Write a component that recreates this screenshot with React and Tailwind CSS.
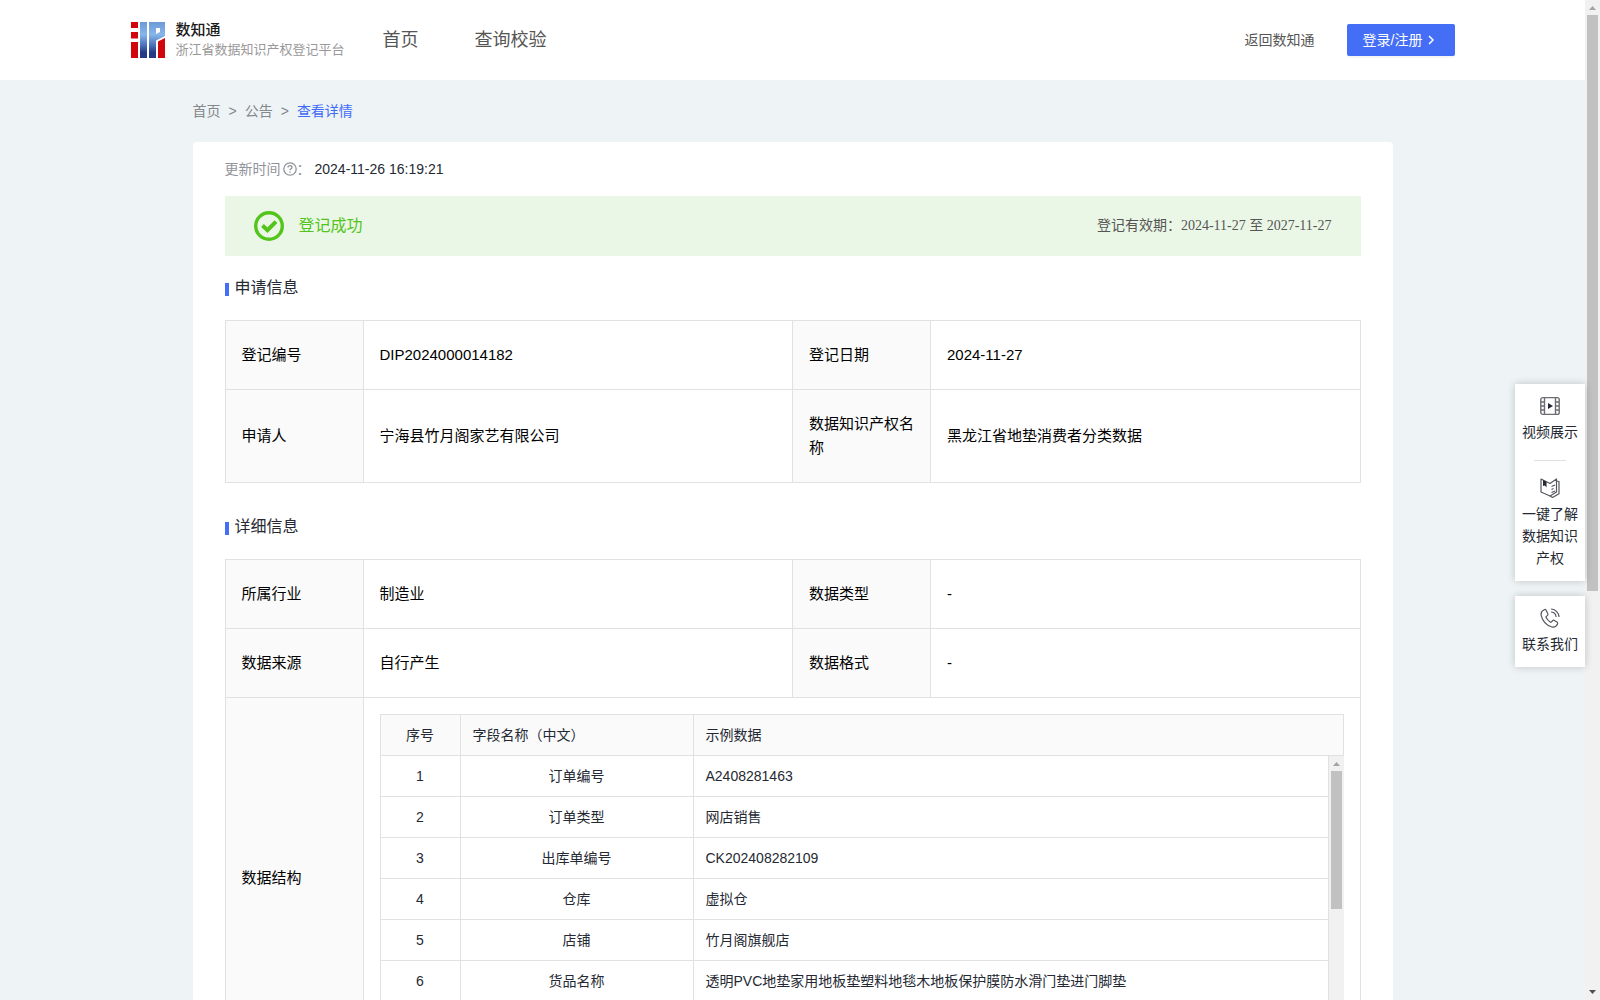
import React from "react";

const applyRows = [
  ["登记编号", "DIP2024000014182", "登记日期", "2024-11-27"],
  ["申请人", "宁海县竹月阁家艺有限公司", "数据知识产权名称", "黑龙江省地垫消费者分类数据"],
];

const detailRows = [
  ["所属行业", "制造业", "数据类型", "-"],
  ["数据来源", "自行产生", "数据格式", "-"],
];

const fields = [
  ["订单编号", "A2408281463"],
  ["订单类型", "网店销售"],
  ["出库单编号", "CK202408282109"],
  ["仓库", "虚拟仓"],
  ["店铺", "竹月阁旗舰店"],
  ["货品名称", "透明PVC地垫家用地板垫塑料地毯木地板保护膜防水滑门垫进门脚垫"],
];

function Logo() {
  return (
    <svg width="34" height="36" viewBox="0 0 34 36" aria-hidden="true">
      <defs>
        <linearGradient id="logoBlue" x1="0" y1="0" x2="0" y2="36" gradientUnits="userSpaceOnUse">
          <stop offset="0" stopColor="#6c9ad6" />
          <stop offset="0.35" stopColor="#86b6ea" />
          <stop offset="0.65" stopColor="#4a70b8" />
          <stop offset="0.85" stopColor="#263a86" />
        </linearGradient>
      </defs>
      <path d="M0 0h7v6H0zM0 10h7v6.500H0zM0 20h7v16H0z" fill="#d0060c" />
      <path d="M9 0h7v36H9z" fill="url(#logoBlue)" />
      <path
        d="M18 0h16v14l-9 4.500V36h-7zM25 6v6l4-2V6z"
        fill="url(#logoBlue)"
        fillRule="evenodd"
      />
      <path d="M27 19.500l7-3.500v20h-7z" fill="#d0060c" />
    </svg>
  );
}

function ScrollTrack({ thumb }) {
  return (
    <div className="flex w-[15px] shrink-0 flex-col items-center bg-[#f1f1f1]" aria-hidden="true">
      <svg width="15" height="15" viewBox="0 0 15 15" className="shrink-0">
        <path d="M4 10h7L7.500 6z" fill="#a3a3a3" />
      </svg>
      <div className="flex w-full flex-1 justify-center">
        <div className={`w-[11px] bg-[#c1c1c1] ${thumb}`} />
      </div>
      <svg width="15" height="15" viewBox="0 0 15 15" className="shrink-0">
        <path d="M4 5h7L7.500 9z" fill="#505050" />
      </svg>
    </div>
  );
}

function SectionTitle({ children }) {
  return (
    <h2 className="flex h-6 items-center gap-[6px] text-base text-[#252933]">
      <span className="mt-[3px] h-[13px] w-1 bg-[#446ef5]" />
      {children}
    </h2>
  );
}

function InfoTable({ rows, children }) {
  return (
    <table className="w-full table-fixed border-collapse text-[15px] leading-6 text-black">
      <colgroup>
        <col className="w-[138px]" />
        <col />
        <col className="w-[138px]" />
        <col />
      </colgroup>
      <tbody>
        {rows.map((row) => (
          <tr key={row[0]}>
            {row.map((cell, i) =>
              i % 2 === 0 ? (
                <th key={i} scope="row" className="border border-[#e1e1e1] bg-[#fafafa] px-4 py-[22px] text-left font-normal">
                  {cell}
                </th>
              ) : (
                <td key={i} className="border border-[#e1e1e1] px-4 py-[22px]">
                  {cell}
                </td>
              )
            )}
          </tr>
        ))}
        {children}
      </tbody>
    </table>
  );
}

function FieldCols() {
  return (
    <colgroup>
      <col className="w-[80px]" />
      <col className="w-[233px]" />
      <col />
    </colgroup>
  );
}

function FieldTable() {
  return (
    <div className="text-sm text-[#252933]">
      <div className="border border-[#e1e1e1] bg-[#fafafa]">
        <table className="w-full table-fixed border-separate border-spacing-0">
          <FieldCols />
          <thead>
            <tr className="h-10">
              <th className="border-r border-[#e1e1e1] text-center font-normal">序号</th>
              <th className="border-r border-[#e1e1e1] px-3 text-left font-normal">字段名称（中文）</th>
              <th className="px-3 text-left font-normal">示例数据</th>
            </tr>
          </thead>
        </table>
      </div>
      <div className="flex h-[286px]">
        <div className="min-w-0 flex-1 overflow-hidden border-x border-[#e1e1e1]">
          <table className="w-full table-fixed border-separate border-spacing-0">
            <FieldCols />
            <tbody>
              {fields.map(([name, sample], i) => (
                <tr key={name} className="h-[41px]">
                  <td className="border-r border-b border-[#e1e1e1] text-center">{i + 1}</td>
                  <td className="border-r border-b border-[#e1e1e1] px-3 text-center">{name}</td>
                  <td className="border-b border-[#e1e1e1] px-3">{sample}</td>
                </tr>
              ))}
            </tbody>
          </table>
        </div>
        <ScrollTrack thumb="h-[54%]" />
      </div>
    </div>
  );
}

function VideoIcon() {
  return (
    <svg width="20" height="20" viewBox="0 0 20 20" fill="none" stroke="#6b6d73" strokeWidth="1.4" aria-hidden="true">
      <rect x="0.800" y="1.600" width="18.400" height="16.800" rx="2" />
      <path d="M4.500 1.600v16.800M15.500 1.600v16.800M1 6h3.500M1 10h3.500M1 14h3.500M15.500 6H19M15.500 10H19M15.500 14H19" />
      <path d="M8 7l5 3-5 3z" fill="#252933" stroke="none" />
    </svg>
  );
}

function BookIcon() {
  return (
    <svg width="20" height="20" viewBox="0 0 20 20" fill="none" stroke="#55575e" strokeWidth="1.2" strokeLinejoin="round" aria-hidden="true">
      <path d="M1 1l9 4.500L16.500 1v13L10 18 1 14z" />
      <path d="M16.500 3l2.500.5v12.200L12.500 19.400 10 18" />
      <path d="M3 2l3.500 1.700v5.800L4.800 7.500 3 8z" fill="#252933" stroke="none" />
      <path d="M11.500 8.500L15 7M11.500 11.500L13.500 10.500M11.500 14.500L15 13" />
    </svg>
  );
}

function PhoneIcon() {
  return (
    <svg width="20" height="20" viewBox="0 0 20 20" fill="none" stroke="#55575e" strokeWidth="1.2" strokeLinecap="round" strokeLinejoin="round" aria-hidden="true">
      <path d="M4.200 1.700C2 2.700.6 5 1.300 7.800c1.400 5.300 5 9.300 10.200 11 2.500.7 5-.5 6-2.800.3-.8 0-1.500-.6-1.900l-2.500-1.600c-.8-.5-1.500-.3-2 .3l-.8 1c-.4.4-.9.5-1.400.2-1.800-1.100-3.200-2.600-4.100-4.400-.2-.5-.1-1 .3-1.300l.9-.7c.6-.5.8-1.200.4-2L6.200 2.400c-.4-.8-1.200-1.100-2-.7z" />
      <path d="M11.500 1c3.800.3 7 3.500 7.500 7.500M11.500 4c2.300.3 4.200 2.200 4.500 4.500" />
    </svg>
  );
}

function SideTools() {
  return (
    <aside className="absolute top-[384px] right-[15px] flex w-[70px] flex-col gap-[15px] text-center text-sm leading-[22px] text-[#252933]">
      <div className="flex flex-col items-center bg-white py-3 shadow-[0_0_8px_rgba(0,0,0,0.2)]">
        <a href="#video" className="flex flex-col items-center gap-[5px] px-[6px]">
          <VideoIcon />
          视频展示
        </a>
        <span className="my-[17px] h-px w-8 bg-[#e1e1e1]" />
        <a href="#guide" className="flex flex-col items-center gap-[5px] px-[6px]">
          <BookIcon />
          一键了解数据知识产权
        </a>
      </div>
      <a href="#contact" className="flex flex-col items-center gap-[5px] bg-white px-[6px] py-3 shadow-[0_0_8px_rgba(0,0,0,0.2)]">
        <PhoneIcon />
        联系我们
      </a>
    </aside>
  );
}

function Header() {
  return (
    <header className="h-20 bg-white">
      <div className="mx-auto flex h-full max-w-[1324px] items-center">
        <a href="#top" className="flex w-[252px] items-center gap-[11px]">
          <Logo />
          <span className="flex flex-col whitespace-nowrap">
            <span className="text-[15px] leading-5 font-medium text-[#1a1a1a]">数知通</span>
            <span className="text-[13px] leading-5 text-[#999]">浙江省数据知识产权登记平台</span>
          </span>
        </a>
        <nav className="flex gap-14 text-lg text-[#555]">
          <a href="#home">首页</a>
          <a href="#query">查询校验</a>
        </nav>
        <div className="ml-auto flex items-center gap-8 text-sm">
          <a href="#back" className="text-[#555]">返回数知通</a>
          <button type="button" className="flex h-8 w-[108px] items-center gap-[3px] rounded-[2px] bg-[#446ef5] px-4 whitespace-nowrap text-white shadow-[0_2px_0_rgba(0,0,0,0.04)]">
            登录/注册
            <svg width="12" height="12" viewBox="0 0 12 12" fill="none" stroke="currentColor" strokeWidth="1.5" className="shrink-0" aria-hidden="true">
              <path d="M4 2L8 6l-4 4" />
            </svg>
          </button>
        </div>
      </div>
    </header>
  );
}

function App() {
  return (
    <div className="relative flex h-screen bg-[#eef3f6] font-['Liberation_Sans','Noto_Sans_CJK_SC',sans-serif]">
      <div className="min-w-0 flex-1 overflow-hidden">
        <Header />
        <main className="mx-auto max-w-[1200px]">
          <nav className="flex h-[62px] items-center gap-2 text-sm text-[#84878c]">
            <a href="#home">首页</a>
            <span>&gt;</span>
            <a href="#notice">公告</a>
            <span>&gt;</span>
            <a href="#detail" className="text-[#3f6bf6]">查看详情</a>
          </nav>

          <div className="rounded-[4px] bg-white px-8 pb-8">
            <div className="flex h-[54px] items-center text-sm">
              <span className="text-[#909399]">更新时间</span>
              <svg width="14" height="14" viewBox="0 0 14 14" fill="none" stroke="#909399" strokeWidth="1.300" className="ml-[2px]" aria-hidden="true">
                <circle cx="7" cy="7" r="6.200" />
                <path d="M5 5.600c0-1.200.9-1.900 2-1.900s2 .7 2 1.800C9 6.800 7 6.900 7 8.300M7 9.500v1.200" />
              </svg>
              <span className="text-[#909399]">：</span>
              <span className="ml-1 text-[#252933]">2024-11-26 16:19:21</span>
            </div>

            <div className="flex h-[60px] items-center bg-[#ebf7e6] px-[29px] text-[#52c41a]">
              <svg width="30" height="30" viewBox="0 0 30 30" fill="none" stroke="#52c41a" aria-hidden="true">
                <circle cx="15" cy="15" r="13.300" strokeWidth="3.400" />
                <path d="M8.500 14.500l5 4.700 8.500-8.500" strokeWidth="4" />
              </svg>
              <span className="ml-[15px] text-base">登记成功</span>
              <span className="ml-auto font-['Liberation_Serif','Noto_Sans_CJK_SC',serif] text-sm text-[#555]">
                登记有效期：2024-11-27 至 2027-11-27
              </span>
            </div>

            <section className="mt-5">
              <SectionTitle>申请信息</SectionTitle>
              <div className="mt-5">
                <InfoTable rows={applyRows} />
              </div>
            </section>

            <section className="mt-8">
              <SectionTitle>详细信息</SectionTitle>
              <div className="mt-5">
                <InfoTable rows={detailRows}>
                  <tr>
                    <th scope="row" className="border border-[#e1e1e1] bg-[#fafafa] px-4 text-left font-normal">
                      数据结构
                    </th>
                    <td colSpan={3} className="border border-[#e1e1e1] p-4">
                      <FieldTable />
                    </td>
                  </tr>
                </InfoTable>
              </div>
            </section>
          </div>
        </main>
      </div>
      <ScrollTrack thumb="h-[576px]" />
      <SideTools />
    </div>
  );
}

export default App;
